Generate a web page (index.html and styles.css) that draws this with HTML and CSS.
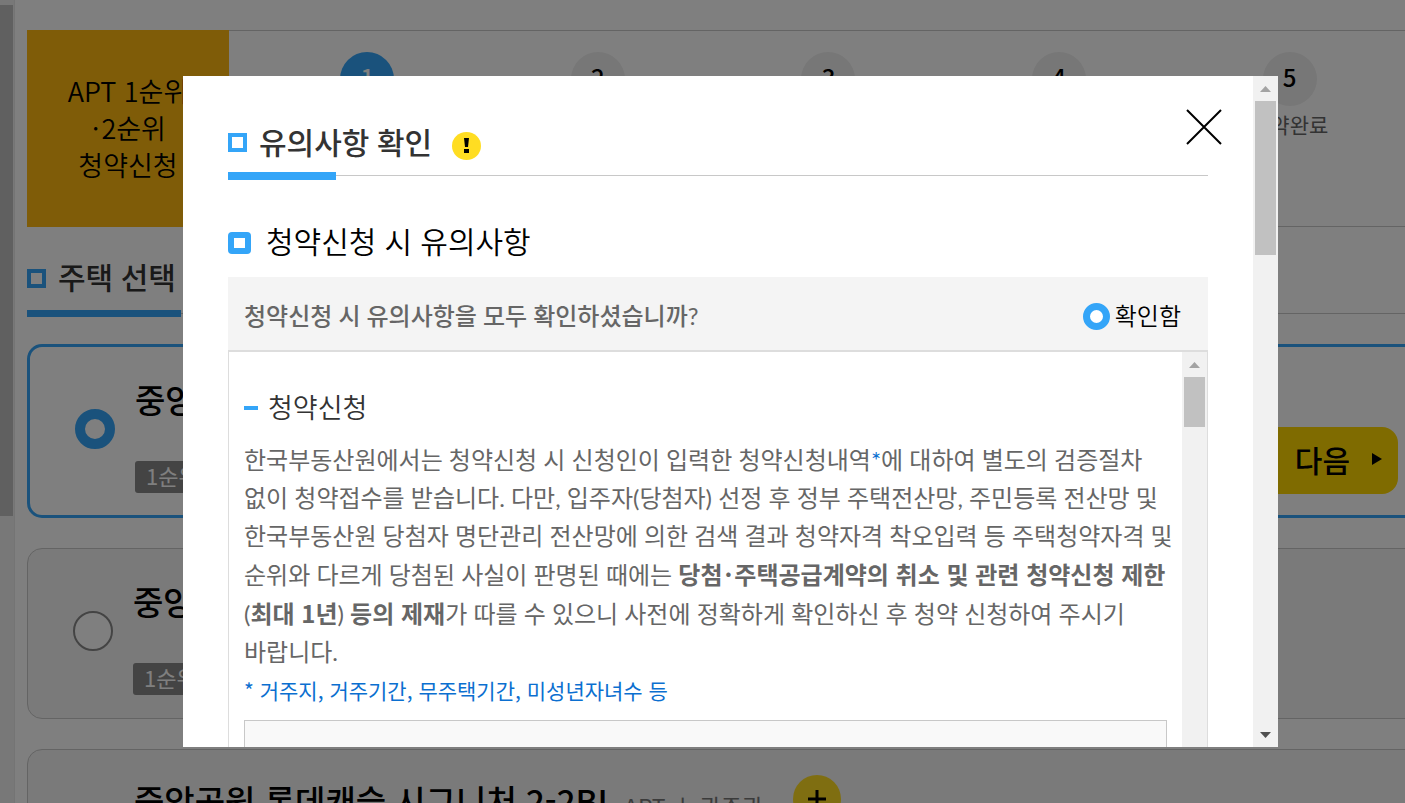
FILE: index.html
```html
<!DOCTYPE html>
<html lang="ko">
<head>
<meta charset="utf-8">
<meta name="viewport" content="width=device-width, initial-scale=1">
<title>유의사항 확인</title>
<link rel="stylesheet" href="styles.css">
</head>
<body>
<div class="page">
  <div class="side-scroll"><div class="side-thumb"></div></div>
  <main class="main">
    <section class="steps">
      <div class="steps-title">APT 1순위<br><span class="dot">·</span>2순위<br>청약신청</div>
      <ol class="step-list">
        <li class="step"><span class="step-no step-no-on">1</span></li>
        <li class="step"><span class="step-no">2</span></li>
        <li class="step"><span class="step-no">3</span></li>
        <li class="step"><span class="step-no">4</span></li>
        <li class="step"><span class="step-no">5</span><span class="step-name">청약완료</span></li>
      </ol>
    </section>
    <h2 class="section-title"><span class="square"></span>주택 선택</h2>
    <div class="cards">
      <article class="card card-on">
        <input class="card-radio" type="radio" name="house" id="house1" checked>
        <div class="card-info">
          <label class="card-name" for="house1">중앙</label>
          <span class="tag">1순위</span>
        </div>
        <button class="next" type="button">다음
          <svg width="10" height="12" viewBox="0 0 10 12"><path d="M0 0L10 6L0 12Z"/></svg>
        </button>
      </article>
      <article class="card">
        <input class="card-radio" type="radio" name="house" id="house2">
        <div class="card-info">
          <label class="card-name" for="house2">중앙</label>
          <span class="tag">1순위</span>
        </div>
      </article>
      <article class="card card-last">
        <span class="card-name">중앙공원 롯데캐슬 시그니처 2-2BL</span>
        <span class="card-meta">APT ㅣ 광주광</span>
        <button class="plus" type="button" aria-label="+"><svg width="18" height="18" viewBox="0 0 18 18"><path d="M9 0V18M0 9H18" stroke="#000" stroke-width="3"/></svg></button>
      </article>
    </div>
  </main>
</div>

<div class="overlay">
  <div class="modal" role="dialog" aria-modal="true" aria-labelledby="modal-title">
    <div class="modal-body">
      <header class="modal-head">
        <h1 class="modal-title" id="modal-title"><span class="square"></span>유의사항 확인</h1>
        <svg class="alert" width="29" height="28" viewBox="0 0 29 28"><ellipse cx="14.5" cy="14" rx="14.5" ry="14" fill="#ffdd22"/><path d="M12 6h5l-1 9h-3zM12 17h5v4h-5z" fill="#000"/></svg>
        <button class="close" type="button" aria-label="닫기"><svg width="36" height="36" viewBox="0 0 36 36"><path d="M1 1L35 35M35 1L1 35" stroke="#000" stroke-width="2"/></svg></button>
      </header>
      <h2 class="sub-title"><svg class="sub-icon" width="23" height="22" viewBox="0 0 23 22"><rect width="23" height="22" rx="4" fill="#34a5f8"/><rect x="6" y="6" width="11" height="10" fill="#fff"/></svg>청약신청 시 유의사항</h2>
      <div class="question">
        <p class="question-text">청약신청 시 유의사항을 모두 확인하셨습니까<span class="light">?</span></p>
        <label class="agree"><input class="agree-radio" type="radio" name="agree" checked>확인함</label>
      </div>
      <div class="notice">
        <div class="notice-body">
          <h3 class="notice-title">청약신청</h3>
          <p class="notice-text">한국부동산원에서는 청약신청 시 신청인이 입력한 청약신청내역<span class="star">*</span>에 대하여 별도의 검증절차<br>없이 청약접수를 받습니다. 다만, 입주자(당첨자) 선정 후 정부 주택전산망, 주민등록 전산망 및<br>한국부동산원 당첨자 명단관리 전산망에 의한 검색 결과 청약자격 착오입력 등 주택청약자격 및<br>순위와 다르게 당첨된 사실이 판명된 때에는 <strong>당첨<span class="dot">·</span>주택공급계약의 취소 및 관련 청약신청 제한</strong><br>(<strong>최대 1년</strong>) <strong>등의 제재</strong>가 따를 수 있으니 사전에 정확하게 확인하신 후 청약 신청하여 주시기<br>바랍니다.</p>
          <p class="notice-note">* 거주지, 거주기간, 무주택기간, 미성년자녀수 등</p>
          <div class="notice-box"></div>
        </div>
        <div class="scrollbar">
          <svg class="arrow" width="11" height="6" viewBox="0 0 11 6"><path d="M0 6L5.500 0L11 6Z" fill="#a3a3a3"/></svg>
          <div class="thumb thumb-short"></div>
        </div>
      </div>
    </div>
    <div class="scrollbar">
      <svg class="arrow" width="11" height="6" viewBox="0 0 11 6"><path d="M0 6L5.500 0L11 6Z" fill="#a3a3a3"/></svg>
      <div class="thumb"></div>
      <svg class="arrow arrow-down" width="11" height="6" viewBox="0 0 11 6"><path d="M0 0H11L5.500 6Z" fill="#505050"/></svg>
    </div>
  </div>
</div>
</body>
</html>
```
FILE: styles.css
```css
* { box-sizing: border-box; }
html, body { height: 100%; }
body {
  margin: 0;
  overflow: hidden;
  background: #fff;
  color: #000;
  font-family: "Noto Sans CJK KR", sans-serif;
  font-size: 24px;
  word-break: keep-all;
}
h1, h2, h3, p, ol { margin: 0; padding: 0; }
button { border: 0; padding: 0; background: none; font: inherit; color: inherit; }
svg { display: block; flex: none; }
.dot { padding: 0 2px; }

.page { display: flex; height: 100vh; overflow: hidden; }
.side-scroll { flex: none; width: 15px; padding-top: 5px; background: #f1f1f1; border-right: 1px solid #e8e8e8; }
.side-thumb { width: 13px; height: 511px; background: #c1c1c1; }
.main { flex: 1; min-width: 0; padding: 30px 0 0 12px; }

.steps { display: flex; height: 197px; border: solid #c8c8c8; border-width: 1px 0; }
.steps-title {
  flex: none;
  width: 202px;
  margin: -1px 0;
  padding-top: 42px;
  background: #ffb811;
  font-size: 27px;
  font-weight: 350;
  line-height: 37px;
  text-align: center;
}
.step-list { flex: 1; display: grid; grid-template-columns: repeat(5, 1fr); padding: 21px 0 0 23px; list-style: none; }
.step { display: flex; flex-direction: column; align-items: center; }
.step-no {
  width: 54px;
  height: 54px;
  border-radius: 50%;
  background: #eee;
  font-weight: 500;
  line-height: 50px;
  text-align: center;
}
.step-no-on { background: #34a5f8; color: #fff; }
.step-name { margin-top: 3px; color: #666; font-size: 21px; line-height: 30px; }

.square { flex: none; width: 19px; height: 19px; border: 4px solid #34a5f8; }
.section-title {
  display: flex;
  align-items: center;
  gap: 12px;
  height: 87px;
  padding-top: 14px;
  border-bottom: 1px solid #c8c8c8;
  color: #333;
  font-family: Lato, "Noto Sans CJK KR", sans-serif;
  font-size: 30px;
  font-weight: 500;
  line-height: 40px;
  position: relative;
}
.section-title .square { margin-top: 2px; }
.section-title::after {
  content: "";
  position: absolute;
  left: 0;
  bottom: -4px;
  width: 154px;
  height: 7px;
  background: #34a5f8;
}

.cards { display: grid; gap: 30px; margin: 30px -30px 0 0; }
.card {
  display: flex;
  align-items: flex-start;
  height: 171px;
  padding: 27px 36px 0 45px;
  border: 1px solid #c8c8c8;
  border-radius: 15px;
  background: #f4f4f4;
}
.card-on { height: 174px; padding-right: 34px; border: 3px solid #34a5f8; background: #fff; }
.card-radio, .agree-radio { appearance: none; flex: none; margin: 0; border-radius: 50%; background: #fff; }
.card-radio { width: 40px; height: 40px; margin: 35px 20px 0 0; border: 2px solid #888; }
.card-radio:checked { border: 10px solid #34a5f8; }
.card-info { display: flex; flex-direction: column; align-items: flex-start; gap: 37px; }
.card-name { font-size: 33px; font-weight: 500; line-height: 50px; white-space: nowrap; }
.tag { height: 32px; padding: 0 11px; border-radius: 3px; background: #888; color: #fff; font-size: 22px; line-height: 28px; }
.card-last { padding-left: 106px; padding-top: 25px; }
.card-meta { margin: 6px 0 0 8px; color: #777; font-size: 23px; line-height: 50px; white-space: nowrap; }
.plus { display: flex; flex: none; align-items: center; justify-content: center; width: 48px; height: 48px; margin-left: 30px; border-radius: 50%; background: #ffdd22; }
.next {
  display: flex;
  align-items: center;
  justify-content: flex-end;
  gap: 22px;
  width: 180px;
  height: 67px;
  margin: 53px 0 0 auto;
  padding: 0 16px 3px 0;
  border-radius: 16px;
  background: #ffd600;
  font-size: 30px;
  font-weight: 500;
}

.overlay {
  position: fixed;
  inset: 0;
  padding: 76px 127px 56px 183px;
  background: rgba(0, 0, 0, 0.5);
}
.modal { display: flex; height: 100%; background: #fff; overflow: hidden; font-family: Lato, "Noto Sans CJK KR", sans-serif; }
.modal-body { flex: 1; min-width: 0; padding: 32px 45px 0; overflow: hidden; }
.modal-head {
  position: relative;
  display: flex;
  height: 68px;
  border-bottom: 1px solid #c8c8c8;
}
.modal-head::after {
  content: "";
  position: absolute;
  left: 0;
  bottom: -5px;
  width: 108px;
  height: 8px;
  background: #34a5f8;
}
.modal-title { display: flex; align-items: center; gap: 12px; height: 68px; color: #333; font-size: 30px; font-weight: 500; line-height: 40px; }
.alert { margin: 24px 0 0 20px; }
.close { position: absolute; top: 1px; right: -14px; }
.sub-title { display: flex; align-items: center; gap: 15px; margin-top: 41px; font-size: 30px; font-weight: 350; line-height: 48px; }
.sub-icon { margin-top: 4px; }
.question {
  display: flex;
  align-items: center;
  justify-content: space-between;
  height: 73px;
  margin-top: 12px;
  padding: 5px 27px 0 16px;
  background: #f4f4f4;
  line-height: 36px;
}
.question-text { color: #666; font-weight: 500; }
.light { font-weight: 400; }
.agree { display: flex; align-items: center; gap: 5px; font-weight: 350; }
.agree-radio { width: 27px; height: 27px; border: 7px solid #34a5f8; }
.notice { display: flex; border: 1px solid #ddd; border-top-width: 2px; }
.notice-body { flex: 1; min-width: 0; padding: 36px 15px 0; }
.notice-title { display: flex; align-items: center; gap: 10px; color: #333; font-size: 27px; font-weight: 350; line-height: 40px; }
.notice-title::before { content: ""; width: 14px; height: 4px; background: #34a5f8; }
.notice-text { margin-top: 13px; color: #666; font-weight: 400; line-height: 38px; white-space: nowrap; }
.notice-text strong { font-family: "Noto Sans CJK KR", sans-serif; font-weight: 700; }
.star, .notice-note { color: #0b6fd0; }
.notice-note { font-family: "Noto Sans CJK KR", sans-serif; font-size: 21px; font-weight: 400; line-height: 38px; }
.notice-box { height: 120px; margin-top: 11px; border: 1px solid #c8c8c8; background: #f9f9f9; }
.scrollbar { flex: none; display: flex; flex-direction: column; align-items: center; width: 25px; background: #f1f1f1; }
.arrow { margin: 10px 0 9px; }
.arrow-down { margin-top: auto; }
.thumb { width: 21px; height: 154px; background: #c1c1c1; }
.thumb-short { height: 50px; }
```
